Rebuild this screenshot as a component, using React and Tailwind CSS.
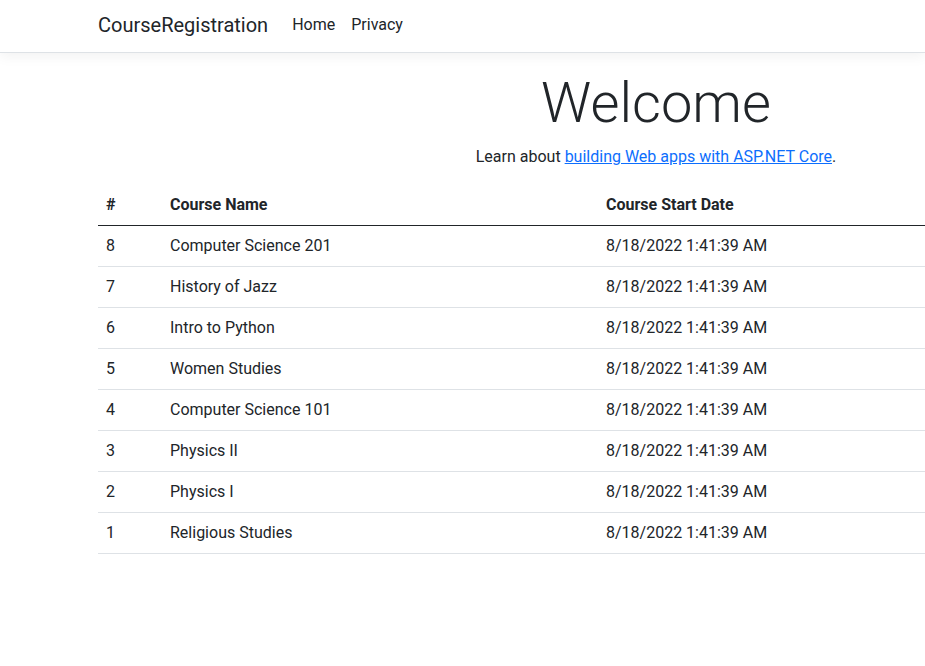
const courses = [
  { id: 8, name: "Computer Science 201" },
  { id: 7, name: "History of Jazz" },
  { id: 6, name: "Intro to Python" },
  { id: 5, name: "Women Studies" },
  { id: 4, name: "Computer Science 101" },
  { id: 3, name: "Physics II" },
  { id: 2, name: "Physics I" },
  { id: 1, name: "Religious Studies" },
];

export default function App() {
  return (
    <div className="min-h-[666px] overflow-x-hidden bg-white text-[#212529] font-['Roboto','Liberation_Sans',sans-serif]">
      <header className="border-b border-[#dee2e6] bg-white shadow-[0_4px_12px_rgba(0,0,0,0.05)] mb-[17px]">
        <nav className="ml-[86px] w-[1140px] px-3 h-[52px] flex items-center">
          <a className="text-[20px] leading-[30px] mr-4 text-[#212529] -mt-[2px]">CourseRegistration</a>
          <a className="px-2 text-[16px] leading-6 text-[#212529] -mt-[2px]">Home</a>
          <a className="px-2 text-[16px] leading-6 text-[#212529] -mt-[2px]">Privacy</a>
        </nav>
      </header>

      <main className="ml-[86px] w-[1140px] px-3 pb-3">
        <div className="text-center">
          <h1 className="text-[56px] leading-[67px] font-light mb-2">Welcome</h1>
          <p className="text-[16px] leading-6 mb-4">
            Learn about{" "}
            <a className="text-[#0d6efd] underline">building Web apps with ASP.NET Core</a>.
          </p>
        </div>

        <table className="w-full text-left text-[16px] leading-6 border-collapse">
          <thead>
            <tr className="border-b border-[#212529]">
              <th className="w-[64px] p-2 font-bold">#</th>
              <th className="w-[436px] p-2 font-bold">Course Name</th>
              <th className="p-2 font-bold">Course Start Date</th>
            </tr>
          </thead>
          <tbody>
            {courses.map((c) => (
              <tr key={c.id} className="border-b border-[#dee2e6]">
                <td className="p-2">{c.id}</td>
                <td className="p-2">{c.name}</td>
                <td className="p-2">8/18/2022 1:41:39 AM</td>
              </tr>
            ))}
          </tbody>
        </table>
      </main>
    </div>
  );
}
